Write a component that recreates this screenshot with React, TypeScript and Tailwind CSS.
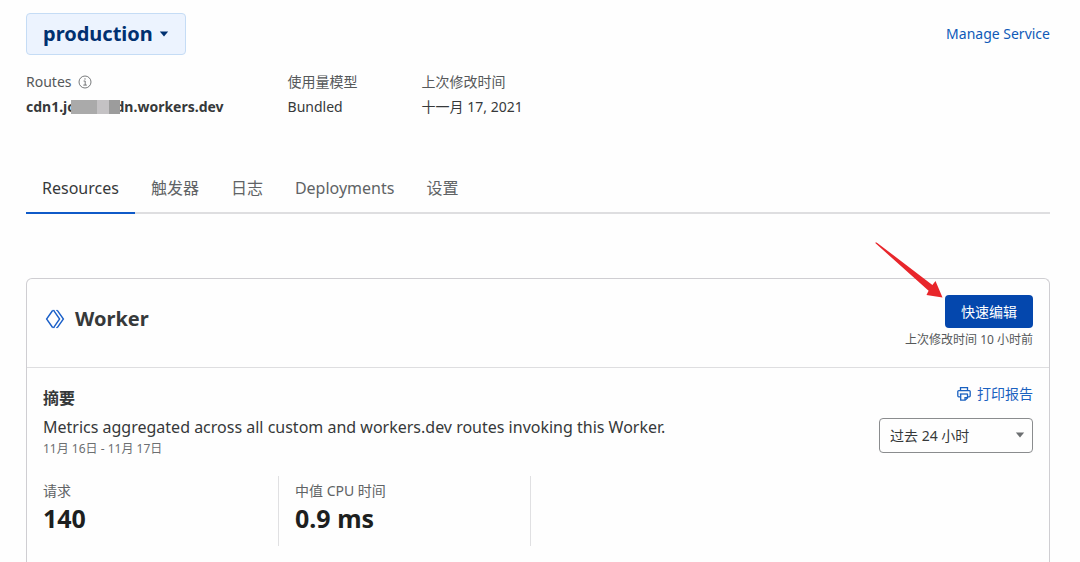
import { useState } from 'react'
import type { ReactNode } from 'react'

interface InfoItem {
  label: string
  value: ReactNode
  strong?: boolean
  info?: boolean
}

interface Metric {
  label: string
  value: string
}

const tabs = ['Resources', '触发器', '日志', 'Deployments', '设置']

const metrics: Metric[] = [
  { label: '请求', value: '140' },
  { label: '中值 CPU 时间', value: '0.9 ms' },
]

const infoItems: InfoItem[] = [
  { label: 'Routes', value: <MaskedRoute />, strong: true, info: true },
  { label: '使用量模型', value: 'Bundled' },
  { label: '上次修改时间', value: '十一月 17, 2021' },
]

function MaskedRoute() {
  return (
    <span className="flex items-center">
      cdn1.jc
      <span className="relative -mx-1 flex h-3.5 w-[49px]">
        <span className="flex-[26] bg-[#aaaaaa]" />
        <span className="flex-[12] bg-[#c4c2c4]" />
        <span className="flex-[11] bg-[#9c9c9c]" />
      </span>
      dn.workers.dev
    </span>
  )
}

function Caret({ className }: { className: string }) {
  return (
    <svg viewBox="0 0 10 6" className={className} fill="currentColor" aria-hidden="true">
      <path d="M0.8 0.5h8.4L5 5.5z" />
    </svg>
  )
}

function InfoIcon() {
  return (
    <svg viewBox="0 0 14 14" className="size-3.5" fill="none" stroke="currentColor" aria-hidden="true">
      <circle cx="7" cy="7" r="6" strokeWidth="0.8" />
      <path d="M5.6 6h1.6v4M5.3 10.1h3.6" strokeWidth="0.8" />
      <circle cx="7" cy="3.9" r="0.6" fill="currentColor" stroke="none" />
    </svg>
  )
}

function WorkerIcon() {
  return (
    <svg viewBox="0 0 20 20" className="size-5 text-[#1a5fc8]" fill="none" stroke="currentColor" strokeWidth="1.4" aria-hidden="true">
      <path d="M7.6 1.5 1.6 10l6 8.5" />
      <path d="M8.6 1.4 14.6 10l-6 8.6" />
      <path d="M12.3 1.4 18.4 10l-6.1 8.6" />
      <path d="M7.4 1.4h2M11.2 1.4h1.4M7.4 18.6h2M11.2 18.6h1.4" strokeWidth="1" />
    </svg>
  )
}

function PrintIcon() {
  return (
    <svg viewBox="0 0 14 16" className="h-4 w-3.5" fill="none" stroke="currentColor" strokeWidth="1.3" aria-hidden="true">
      <path d="M3.5 4.5V1.7h7v2.8" />
      <path d="M3.6 10.8H1.8a1 1 0 0 1-1-1V5.6a1 1 0 0 1 1-1h10.4a1 1 0 0 1 1 1v4.2a1 1 0 0 1-1 1h-1.7" />
      <path d="M2.8 8h8" />
      <path d="M3.7 8v6.2h4.5l2.3-2.3V8" />
      <path d="M8 14v-2.3h2.4" />
    </svg>
  )
}

function PointerArrow() {
  return (
    <svg viewBox="0 0 70 57" className="pointer-events-none absolute right-full bottom-full mr-px -mb-1 h-[57px] w-[70px] max-w-none text-[#e8262b]" fill="currentColor" aria-hidden="true">
      <path d="M1 0.8 L2.6 0.4 L58.4 43 L61.5 39 L68.5 55.5 L52.5 53 L54.6 48.8 Z" />
    </svg>
  )
}

export default function App() {
  const [activeTab, setActiveTab] = useState('Resources')

  return (
    <div className="flex min-h-screen flex-col bg-[#fefefe] pt-[13px] pr-[30px] pl-[26px] font-['Noto_Sans','Noto_Sans_CJK_SC',sans-serif] text-[#36393a]">
      <header className="flex items-center justify-between">
        <button
          type="button"
          className="flex h-[42px] items-center gap-1.5 rounded border border-[#c5dcf5] bg-[#ecf3fe] px-4 text-xl font-bold text-[#003070]"
        >
          production
          <Caret className="h-1.5 w-2.5" />
        </button>
        <a href="#service" className="text-sm text-[#0f5ab8]">
          Manage Service
        </a>
      </header>

      <dl className="mt-[15px] flex gap-16 text-sm">
        {infoItems.map((item) => (
          <div key={item.label}>
            <dt className="flex h-6 items-center gap-1.5 text-[#55585a]">
              {item.label}
              {item.info && <InfoIcon />}
            </dt>
            <dd className={item.strong ? 'flex h-[26px] items-center font-bold' : 'flex h-[26px] items-center'}>
              {item.value}
            </dd>
          </div>
        ))}
      </dl>

      <nav className="mt-11 flex border-b-2 border-[#dedee0]" role="tablist">
        {tabs.map((tab) => (
          <button
            key={tab}
            type="button"
            role="tab"
            aria-selected={tab === activeTab}
            onClick={() => setActiveTab(tab)}
            className={
              tab === activeTab
                ? '-mb-0.5 h-[50px] border-b-2 border-[#0f5ac8] px-4 text-[#36393a]'
                : '-mb-0.5 h-[50px] border-b-2 border-transparent px-4 text-[#606365]'
            }
          >
            {tab}
          </button>
        ))}
      </nav>

      <main className="mt-16 flex flex-1 flex-col rounded-t-md border-x border-t border-[#cfced2]">
        <div className="flex h-[89px] items-start justify-between border-b border-[#dedee0] px-4 pt-4">
          <h2 className="ml-0.5 flex h-12 items-center gap-2.5 text-xl font-bold">
            <WorkerIcon />
            Worker
          </h2>
          <div className="flex flex-col items-end gap-1">
            <div className="relative">
              <button type="button" className="h-[33px] rounded bg-[#0447ad] px-4 text-sm text-white">
                快速编辑
              </button>
              <PointerArrow />
            </div>
            <p className="text-xs leading-4 text-[#55585a]">上次修改时间 10 小时前</p>
          </div>
        </div>

        <section className="flex items-start justify-between px-4 pt-4">
          <div>
            <h3 className="leading-7 font-bold">摘要</h3>
            <p className="leading-[30px]">
              Metrics aggregated across all custom and workers.dev routes invoking this Worker.
            </p>
            <p className="text-xs leading-[14px] text-[#6c6f71]">11月 16日 - 11月 17日</p>
          </div>
          <div className="flex flex-col items-end gap-3.5">
            <button type="button" className="flex items-center gap-1.5 text-sm text-[#1a61c0]">
              <PrintIcon />
              打印报告
            </button>
            <div className="relative">
              <select
                aria-label="时间范围"
                className="h-[35px] w-[154px] appearance-none rounded border border-[#8a8c8e] bg-transparent px-2.5 text-sm"
              >
                <option>过去 24 小时</option>
              </select>
              <Caret className="pointer-events-none absolute top-3.5 right-2 h-1.5 w-2.5 text-[#6c6f71]" />
            </div>
          </div>
        </section>

        <dl className="mt-5 flex px-4">
          {metrics.map((metric) => (
            <div key={metric.label} className="mr-4 h-[70px] w-[236px] border-r border-[#e0e0e2] pt-1">
              <dt className="text-sm leading-[22px] text-[#606365]">{metric.label}</dt>
              <dd className="text-[25px] leading-8 font-bold text-[#1d1f20]">{metric.value}</dd>
            </div>
          ))}
        </dl>
      </main>
    </div>
  )
}
